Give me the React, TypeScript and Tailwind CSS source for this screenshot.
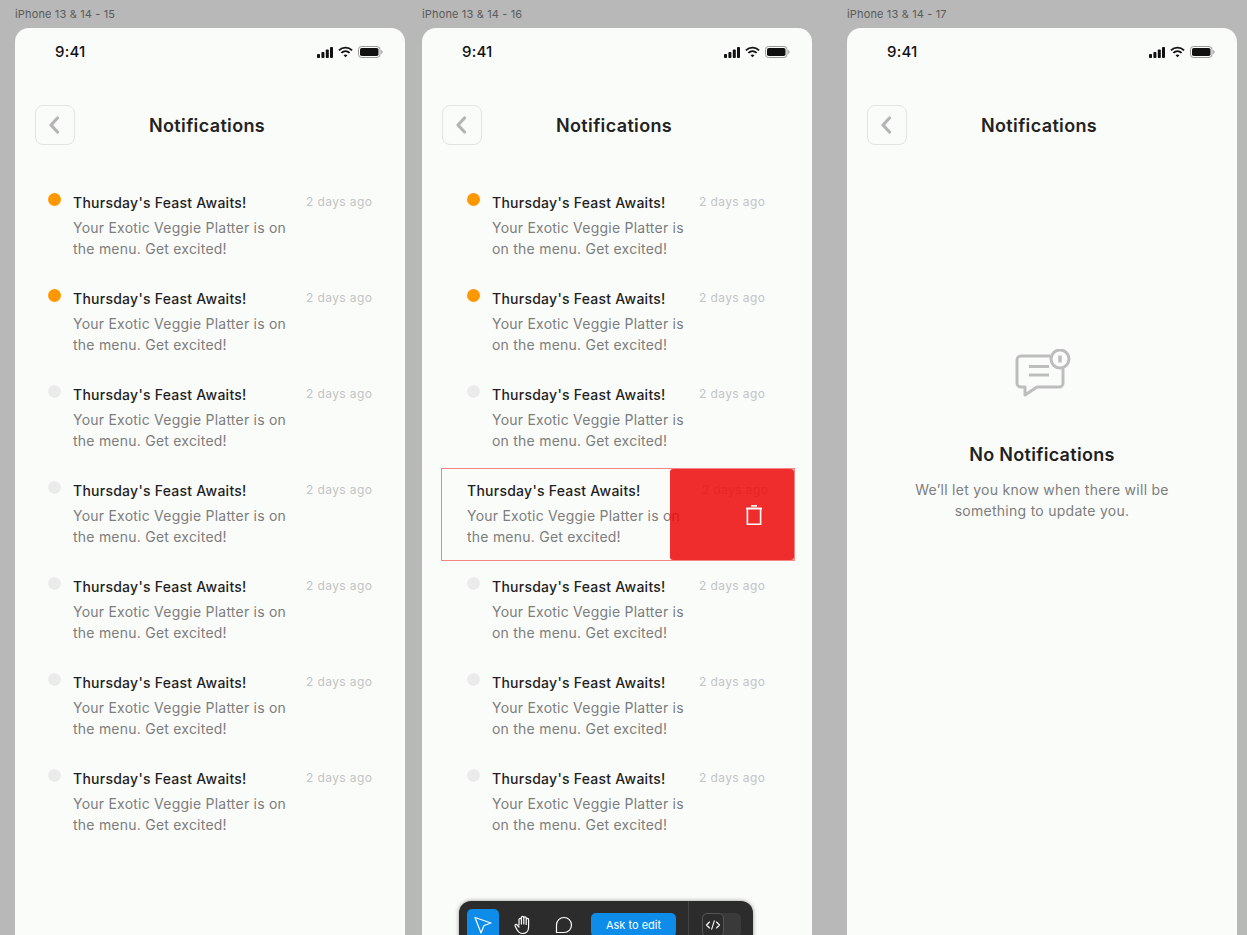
const Signal = () => (
  <svg width="16" height="11" viewBox="0 0 16 11" fill="#111"><rect x="0" y="7" width="3" height="4" rx="0.8"/><rect x="4.400" y="5" width="3" height="6" rx="0.8"/><rect x="8.800" y="2.500" width="3" height="8.500" rx="0.8"/><rect x="13" y="0" width="3" height="11" rx="0.8"/></svg>
);
const Wifi = () => (
  <svg width="15" height="12" viewBox="0 0 16 12" fill="none" stroke="#111" strokeWidth="2"><path d="M1 4.200C5 .4 11 .4 15 4.200"/><path d="M3.600 6.900c2.600-2.400 6.200-2.400 8.800 0"/><path d="M8 11.600 5.900 9.400c1.200-1 3-1 4.200 0z" fill="#111" stroke="none"/></svg>
);
const Battery = () => (
  <svg width="25" height="12" viewBox="0 0 25 12" fill="none"><rect x="0.500" y="0.500" width="21.500" height="11" rx="3" stroke="#9a9a9a"/><rect x="2" y="2" width="18.500" height="8" rx="1.800" fill="#111"/><path d="M23.200 4v4c.8-.3 1.300-1.100 1.300-2s-.5-1.700-1.300-2z" fill="#9a9a9a"/></svg>
);
const Chevron = () => (
  <svg width="12" height="18" viewBox="0 0 12 18" fill="none" stroke="#b4b4b4" strokeWidth="3.200" strokeLinecap="round" strokeLinejoin="round"><path d="M9.500 2 3 9l6.500 7"/></svg>
);
const Trash = () => (
  <svg width="18" height="20" viewBox="0 0 18 20" fill="none" stroke="#fff" strokeWidth="1.600"><path d="M1 3.500h16"/><path d="M6 .9h6"/><path d="M2.400 3.500h13.200v15.700H2.400z"/></svg>
);
const ChatAlert = () => (
  <svg width="56" height="49" viewBox="0 0 56 49" fill="none" stroke="#bdbdbd" strokeWidth="3"><path d="M35 7H6a4 4 0 0 0-4 4v23a4 4 0 0 0 4 4h4v8l12-8h22a4 4 0 0 0 4-4V20" strokeLinejoin="round"/><circle cx="45" cy="10" r="9"/><path d="M45 6.500v7" strokeWidth="3.500"/><path d="M14 17.500h20M14 26h20"/></svg>
);

function Status() {
  return (
    <div className="flex h-[48px] items-center justify-between pl-[40px] pr-[22px]">
      <span className="text-[15px] font-medium text-[#111] tracking-[0.2px]">9:41</span>
      <div className="flex items-center gap-[5px]"><Signal /><Wifi /><Battery /></div>
    </div>
  );
}
function Header() {
  return (
    <div className="mt-[29px] flex h-[40px] items-center pl-[20px]">
      <div className="flex h-[40px] w-[40px] items-center justify-center rounded-[8px] border border-[#e2e4e2] pr-[2px]"><Chevron /></div>
      <h1 className="ml-[74px] text-[18px] font-semibold text-[#222] tracking-[0.36px]">Notifications</h1>
    </div>
  );
}
function Copy({ narrow }: { narrow?: boolean }) {
  return (
    <div className={narrow ? "w-[207px] shrink-0" : "w-[218px] shrink-0"}>
      <div className="text-[14px] leading-[21px] font-medium text-[#1f1f1f] whitespace-nowrap tracking-[0.25px]">Thursday's Feast Awaits!</div>
      <p className="mt-[4px] text-[14px] leading-[21px] text-[#7d7d7d] tracking-[0.23px]">Your Exotic Veggie Platter is on the menu. Get excited!</p>
    </div>
  );
}
function Row({ on, narrow }: { on?: boolean; narrow?: boolean }) {
  return (
    <div className={narrow ? "flex h-[96px] pl-[45px]" : "flex h-[96px] pl-[33px]"}>
      <div className={on ? "mt-[15px] h-[13px] w-[13px] shrink-0 rounded-full bg-[#ff9800]" : "mt-[15px] h-[13px] w-[13px] shrink-0 rounded-full bg-[#ebebeb]"} />
      <div className="ml-[12px] mt-[14px] flex items-start">
        <Copy narrow={narrow} />
        <span className={narrow ? "ml-0 mt-[1px] text-[12px] leading-[18px] text-[#c4c4c4] whitespace-nowrap tracking-[0.4px]" : "ml-[15px] mt-[1px] text-[12px] leading-[18px] text-[#c4c4c4] whitespace-nowrap tracking-[0.4px]"}>2 days ago</span>
      </div>
    </div>
  );
}
function Swiped() {
  return (
    <div className="relative ml-[19px] mt-[2px] mb-[1px] flex h-[93px] w-[354px] border border-[#f58585] pl-[25px] pt-[11px]">
      <div className="w-[216px] shrink-0">
        <div className="text-[14px] leading-[21px] font-medium text-[#1f1f1f] whitespace-nowrap tracking-[0.25px]">Thursday's Feast Awaits!</div>
        <p className="mt-[4px] text-[14px] leading-[21px] text-[#7d7d7d] tracking-[0.23px]">Your Exotic Veggie Platter is on the menu. Get excited!</p>
      </div>
      <span className="ml-[19px] mt-[1px] text-[12px] leading-[18px] text-[#c4c4c4] whitespace-nowrap tracking-[0.4px]">2 days ago</span>
      <div className="absolute bottom-0 right-0 top-0 flex w-[124px] items-center justify-center rounded-[3px] bg-[#ec0808]/85 pl-[44px]"><Trash /></div>
    </div>
  );
}
function Toolbar() {
  return (
    <div className="absolute left-[37px] top-[873px] flex h-[60px] w-[294px] items-start rounded-[12px] bg-[#2c2c2c] pl-[8px] pt-[8px] shadow-[0_0_4px_rgba(0,0,0,0.4)]">
      <div className="flex h-[32px] w-[32px] items-center justify-center rounded-[5px] bg-[#0d8ce9]">
        <svg width="20" height="20" viewBox="0 0 20 20" fill="none" stroke="#fff" strokeWidth="1.200" strokeLinejoin="round"><path d="M2 2.500 18 8l-7 2.500L8 18z"/></svg>
      </div>
      <div className="ml-[14px] mt-[6px]">
        <svg width="20" height="20" viewBox="0 0 20 20" fill="none" stroke="#fff" strokeWidth="1.200" strokeLinecap="round" strokeLinejoin="round"><path d="M6 10V4.500a1.200 1.200 0 0 1 2.400 0V9m0-5.500V2.600a1.200 1.200 0 0 1 2.400 0V9m0-6a1.200 1.200 0 0 1 2.400 0v6.500m0-5a1.200 1.200 0 0 1 2.400 0V12c0 4-2.500 6.500-6 6.500-3 0-4.500-1.500-6-4.500l-1.500-3c-.6-1.300 1.200-2.200 2-1L6 12"/></svg>
      </div>
      <div className="ml-[22px] mt-[7px]">
        <svg width="18" height="18" viewBox="0 0 18 18" fill="none" stroke="#fff" strokeWidth="1.200"><path d="M1.500 16.500V9a7.500 7.500 0 1 1 7.500 7.500z" strokeLinejoin="round"/></svg>
      </div>
      <div className="ml-[18px] mt-[4px] flex h-[24px] w-[85px] items-center justify-center rounded-[5px] bg-[#0d8ce9] text-[11px] text-white">Ask to edit</div>
      <div className="ml-[12px] -mt-[8px] h-[60px] w-px bg-[#444]" />
      <div className="ml-[13px] mt-[4px] h-[24px] w-[39px] rounded-[5px] bg-[#3a3a3a]">
        <div className="flex h-[24px] w-[22px] items-center justify-center rounded-[5px] border border-[#555] bg-[#2c2c2c]">
          <svg width="16" height="12" viewBox="0 0 16 12" fill="none" stroke="#fff" strokeWidth="1.100" strokeLinecap="round" strokeLinejoin="round"><path d="M4.500 3 1.500 6l3 3M11.500 3l3 3-3 3M9.300 1.800 6.700 10.200"/></svg>
        </div>
      </div>
    </div>
  );
}
function Frame({ label, className, children }: { label: string; className: string; children: React.ReactNode }) {
  return (
    <div className={className}>
      <div className="h-[12px] text-[11px] leading-[12px] text-[#5a5a5a] tracking-[0.15px] whitespace-nowrap">{label}</div>
      <div className="relative mt-[8px] h-[920px] w-[390px] rounded-t-[14px] bg-[#fafcfa]">
        <Status />
        <Header />
        {children}
      </div>
    </div>
  );
}
export default function App() {
  return (
    <div className="flex h-[935px] w-[1247px] overflow-hidden bg-[#b8b8b8] pl-[15px] pt-[8px] font-['Inter',sans-serif]">
      <Frame label="iPhone 13 & 14 - 15" className="w-[390px] shrink-0">
        <div className="mt-[33px]">{[1,1,0,0,0,0,0].map((o,i)=><Row key={i} on={!!o} />)}</div>
      </Frame>
      <Frame label="iPhone 13 & 14 - 16" className="ml-[17px] w-[390px] shrink-0">
        <div className="mt-[33px]">
          <Row on narrow /><Row on narrow /><Row narrow /><Swiped /><Row narrow /><Row narrow /><Row narrow />
        </div>
        <Toolbar />
      </Frame>
      <Frame label="iPhone 13 & 14 - 17" className="ml-[35px] w-[390px] shrink-0">
        <div className="mt-[204px] flex flex-col items-center">
          <div className="ml-[2px]"><ChatAlert /></div>
          <h2 className="mt-[43px] text-[18px] leading-[27px] font-semibold text-[#1f1f1f] tracking-[0.3px]">No Notifications</h2>
          <p className="mt-[11px] w-[270px] text-center text-[14px] leading-[21px] text-[#7d7d7d] tracking-[0.27px]">We’ll let you know when there will be something to update you.</p>
        </div>
      </Frame>
    </div>
  );
}
